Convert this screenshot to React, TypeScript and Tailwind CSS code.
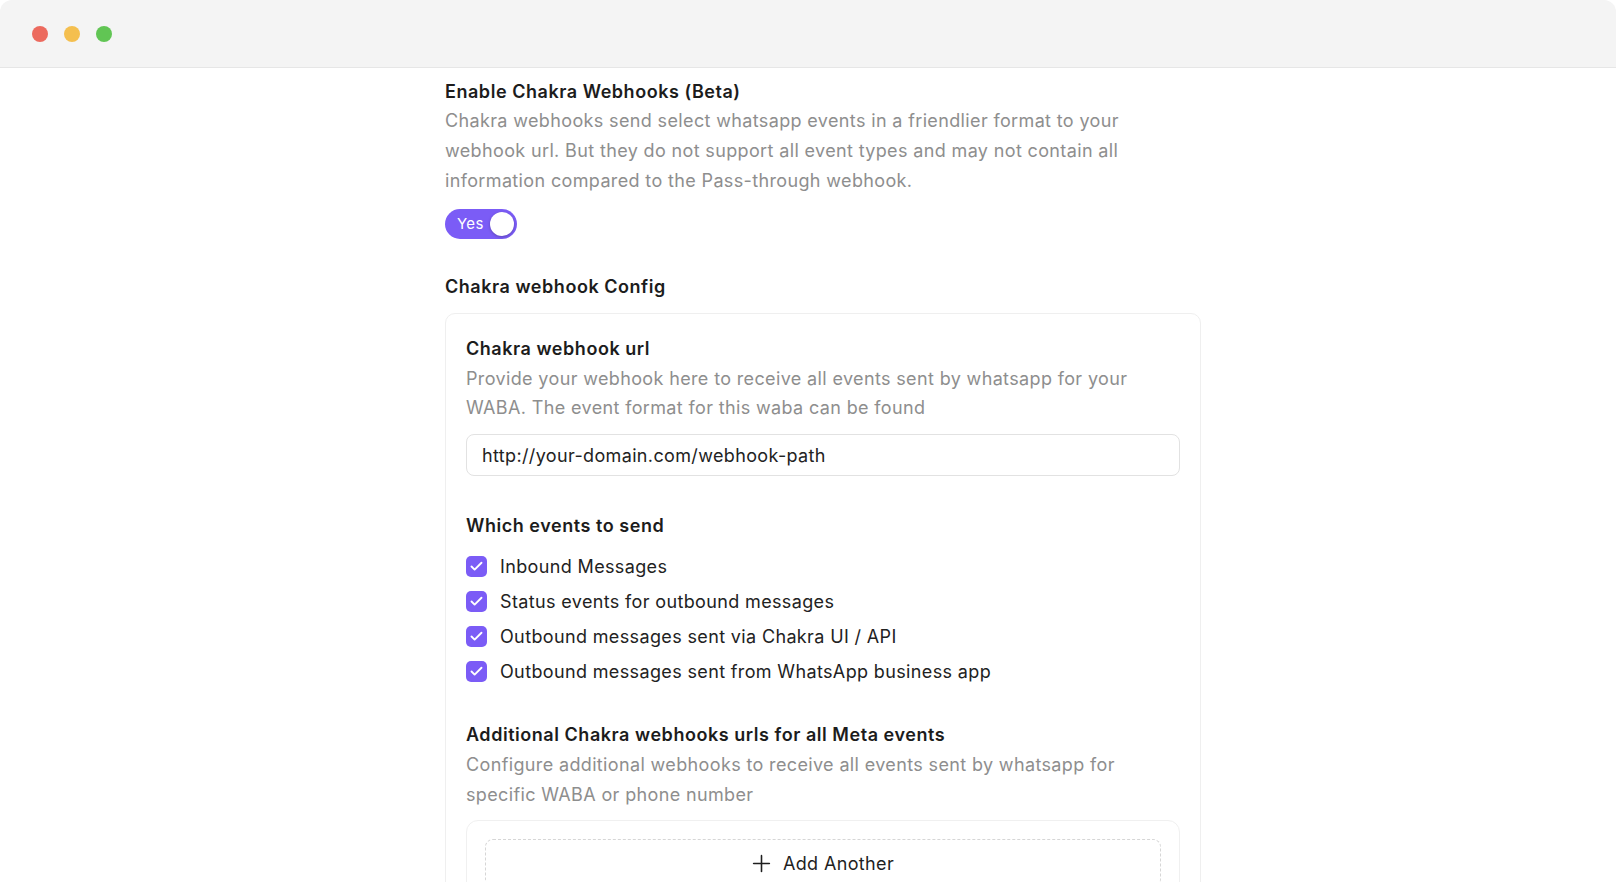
import { useState } from 'react';
import { Check, Plus } from 'lucide-react';

const EVENTS = [
  'Inbound Messages',
  'Status events for outbound messages',
  'Outbound messages sent via Chakra UI / API',
  'Outbound messages sent from WhatsApp business app',
];

function Toggle({ on, onChange }: { on: boolean; onChange: (v: boolean) => void }) {
  return (
    <button
      onClick={() => onChange(!on)}
      className={`flex items-center h-[30px] w-[72px] rounded-full p-[3px] ${on ? 'bg-[#7b5cf6]' : 'bg-[#d4d4d8]'}`}
    >
      <span className={`text-[15px] text-white pl-[9px] tracking-[0.02em] ${on ? '' : 'hidden'}`}>Yes</span>
      <span className="ml-auto h-[24px] w-[24px] rounded-full bg-white shadow-[0_1px_3px_rgba(0,0,0,0.25)]" />
    </button>
  );
}

function EventCheckbox({ label, checked, onToggle }: { label: string; checked: boolean; onToggle: () => void }) {
  return (
    <label className="flex items-center gap-[13px] h-[28px] cursor-pointer" onClick={onToggle}>
      <span
        className={`flex items-center justify-center h-[21px] w-[21px] rounded-[5px] ${checked ? 'bg-[#7b5cf6]' : 'border border-[#d4d4d8] bg-white'}`}
      >
        {checked && <Check className="w-[15px] h-[15px] text-white" strokeWidth={3} />}
      </span>
      <span className="text-[18px] tracking-[0.02em] text-[#222222]">{label}</span>
    </label>
  );
}

export default function App() {
  const [enabled, setEnabled] = useState(true);
  const [url, setUrl] = useState('http://your-domain.com/webhook-path');
  const [events, setEvents] = useState<boolean[]>([true, true, true, true]);

  const heading = 'text-[18px] leading-[28px] font-semibold tracking-[0.03em] text-[#1c1c1c]';
  const muted = 'text-[18px] tracking-[0.02em] text-[#8e8e8e]';

  return (
    <div className="min-h-screen bg-white font-['Inter','Liberation_Sans',sans-serif]">
      {/* Window chrome */}
      <div className="flex items-center gap-4 h-[68px] pl-[32px] bg-[#f4f4f4] border-b border-[#e6e6e6] rounded-t-[12px]">
        <span className="h-4 w-4 rounded-full bg-[#ec6a5e]" />
        <span className="h-4 w-4 rounded-full bg-[#f4bf4f]" />
        <span className="h-4 w-4 rounded-full bg-[#61c554]" />
      </div>

      <div className="pl-[445px]">
        <div className="w-[756px] pt-[10px]">
          <h2 className={heading}>Enable Chakra Webhooks (Beta)</h2>
          <p className={`max-w-[700px] leading-[30px] ${muted}`}>
            Chakra webhooks send select whatsapp events in a friendlier format to your webhook url. But they do not
            support all event types and may not contain all information compared to the Pass-through webhook.
          </p>
          <div className="mt-[13px]">
            <Toggle on={enabled} onChange={setEnabled} />
          </div>

          <h2 className={`mt-[34px] ${heading}`}>Chakra webhook Config</h2>

          <div className="mt-[12px] rounded-[10px] border border-[#efefef] px-[20px] pt-[21px]">
            <h3 className={heading}>Chakra webhook url</h3>
            <p className={`mt-[1px] max-w-[690px] leading-[29px] ${muted}`}>
              Provide your webhook here to receive all events sent by whatsapp for your WABA. The event format for this
              waba can be found
            </p>
            <input
              value={url}
              onChange={e => setUrl(e.target.value)}
              className="mt-[12px] block w-full h-[42px] rounded-[8px] border border-[#e2e2e2] px-[15px] text-[18px] tracking-[0.02em] text-[#222222] outline-none"
            />

            <h3 className={`mt-[36px] ${heading}`}>Which events to send</h3>
            <div className="mt-[12px] flex flex-col gap-[7px]">
              {EVENTS.map((label, i) => (
                <EventCheckbox
                  key={label}
                  label={label}
                  checked={events[i]}
                  onToggle={() => setEvents(prev => prev.map((v, j) => (j === i ? !v : v)))}
                />
              ))}
            </div>

            <h3 className={`mt-[36px] ${heading}`}>Additional Chakra webhooks urls for all Meta events</h3>
            <p className={`mt-[1px] max-w-[690px] leading-[30px] ${muted}`}>
              Configure additional webhooks to receive all events sent by whatsapp for specific WABA or phone number
            </p>

            <div className="mt-[10px] rounded-[12px] border border-[#f0f0f0] px-[18px] pt-[18px] pb-[18px]">
              <button className="flex w-full items-center justify-center gap-[8px] h-[48px] pr-[4px] rounded-[8px] border border-dashed border-[#d6d6d6] text-[18px] tracking-[0.02em] text-[#1f1f1f]">
                <Plus className="w-[27px] h-[27px]" strokeWidth={1.4} />
                Add Another
              </button>
            </div>
          </div>
        </div>
      </div>
    </div>
  );
}
